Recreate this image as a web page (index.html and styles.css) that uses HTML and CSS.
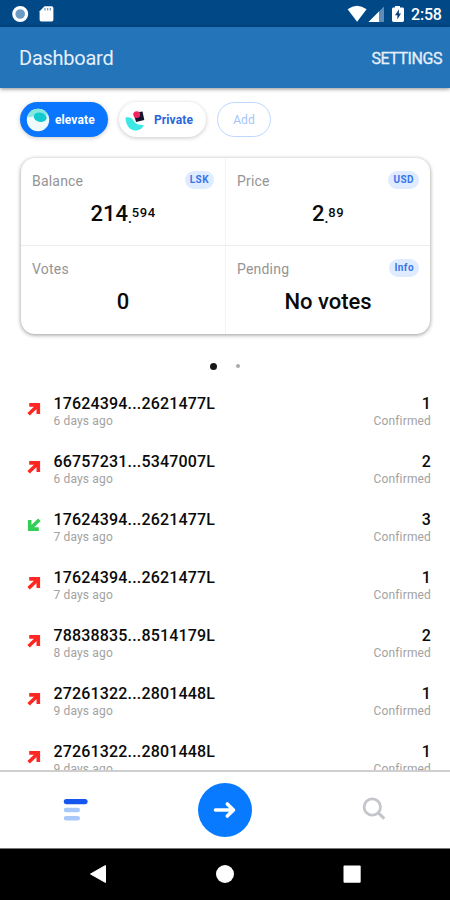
FILE: index.html
```
<!DOCTYPE html>
<html lang="en">
<head>
<meta charset="utf-8">
<title>Dashboard</title>
<link rel="stylesheet" href="styles.css">
</head>
<body>
<svg class="defs" width="0" height="0">
  <symbol id="arrow" viewBox="0 0 14 14"><path d="M1.6 12.2 L10.5 3.8 M2.2 2.9 H11.3 V12" fill="none" stroke="currentColor" stroke-width="3.6"/></symbol>
</svg>
<div class="phone">
  <div class="status">
    <svg class="status-left" width="42" height="18" viewBox="0 0 42 18">
      <circle cx="8.2" cy="9" r="6.4" fill="#6b9bc2" stroke="#fff" stroke-width="3.2"/>
      <path d="M32.5 1.2 H39.6 Q41.4 1.2 41.4 3 V14.8 Q41.4 16.4 39.8 16.4 H29.2 Q27.6 16.4 27.6 14.8 V6.2 Z" fill="#fff"/>
      <path d="M33 3 V5.5 M35.7 3 V5.5 M38.4 3 V5.5" stroke="#6b8fb5" stroke-width="1.2"/>
    </svg>
    <svg class="status-right" width="60" height="18" viewBox="0 0 60 18">
      <path d="M0.6 4.2 Q10 -2.8 19.6 4.2 L10.1 16.8 Z" fill="#fff"/>
      <path d="M21.5 17 L37 1.5 V17 Z" fill="#5c8cba"/>
      <path d="M21.5 17 L32 6.5 V17 Z" fill="#fff"/>
      <path d="M48 1 H53 V2.6 H55.5 Q57 2.6 57 4 V15.6 Q57 17 55.5 17 H46.5 Q45 17 45 15.6 V4 Q45 2.6 46.5 2.6 H48 Z" fill="#fff"/>
      <path d="M52 4.2 L48 10.2 H50.4 V14.6 L54 8.6 H51.8 Z" fill="#0a3f7c"/>
    </svg>
    <span class="clock">2:58</span>
  </div>
  <header class="bar"><h1>Dashboard</h1><span class="settings">SETTINGS</span></header>
  <main class="content">
    <div class="chips">
      <div class="chip chip-active">
        <svg width="24" height="24" viewBox="0 0 24 24"><circle cx="12" cy="12" r="11.2" fill="#effafa"/><path d="M1.5 8.5 Q4 1 12 .8 Q20 1 22.5 8 Q14 3 7.5 8 Q4 10 1.5 8.5Z" fill="#84e8df"/><ellipse cx="14.2" cy="9.2" rx="6.6" ry="4.6" fill="#12c9cf" transform="rotate(12 14.2 9.2)"/></svg>
        <span>elevate</span>
      </div>
      <div class="chip chip-private">
        <svg width="24" height="24" viewBox="0 0 24 24"><path d="M1.5 9.5 C5 8.5 8 9.5 9.5 12.5 C11.5 16.5 16 17 19.7 17 C18.5 20.8 14.8 22.5 11 22.5 C5 22 1.5 16 1.5 9.5Z" fill="#3ce8e4"/><path d="M9.5 5 L18.5 3.5 L20.3 12 L12 14 Z" fill="#15152f"/><circle cx="12.8" cy="6.6" r="3.4" fill="#f2265f"/></svg>
        <span>Private</span>
      </div>
      <div class="chip chip-add"><span>Add</span></div>
    </div>
    <section class="card">
      <div class="cell"><div class="cell-head"><span>Balance</span><b class="tag">LSK</b></div><div class="value">214<i>.</i><sup>594</sup></div></div>
      <div class="cell"><div class="cell-head"><span>Price</span><b class="tag">USD</b></div><div class="value">2<i>.</i><sup>89</sup></div></div>
      <div class="cell"><div class="cell-head"><span>Votes</span></div><div class="value">0</div></div>
      <div class="cell"><div class="cell-head"><span>Pending</span><b class="tag tag-info">Info</b></div><div class="value">No votes</div></div>
    </section>
    <div class="dots"><span class="dot dot-on"></span><span class="dot"></span></div>
    <div class="list">
      <div class="row"><svg class="arrow"><use href="#arrow"/></svg><div class="who"><b>17624394...2621477L</b><span>6 days ago</span></div><div class="amt"><b>1</b><span>Confirmed</span></div></div>
      <div class="row"><svg class="arrow"><use href="#arrow"/></svg><div class="who"><b>66757231...5347007L</b><span>6 days ago</span></div><div class="amt"><b>2</b><span>Confirmed</span></div></div>
      <div class="row"><svg class="arrow arrow-in"><use href="#arrow"/></svg><div class="who"><b>17624394...2621477L</b><span>7 days ago</span></div><div class="amt"><b>3</b><span>Confirmed</span></div></div>
      <div class="row"><svg class="arrow"><use href="#arrow"/></svg><div class="who"><b>17624394...2621477L</b><span>7 days ago</span></div><div class="amt"><b>1</b><span>Confirmed</span></div></div>
      <div class="row"><svg class="arrow"><use href="#arrow"/></svg><div class="who"><b>78838835...8514179L</b><span>8 days ago</span></div><div class="amt"><b>2</b><span>Confirmed</span></div></div>
      <div class="row"><svg class="arrow"><use href="#arrow"/></svg><div class="who"><b>27261322...2801448L</b><span>9 days ago</span></div><div class="amt"><b>1</b><span>Confirmed</span></div></div>
      <div class="row"><svg class="arrow"><use href="#arrow"/></svg><div class="who"><b>27261322...2801448L</b><span>9 days ago</span></div><div class="amt"><b>1</b><span>Confirmed</span></div></div>
    </div>
  </main>
  <nav class="tabs">
    <svg width="24" height="24" viewBox="0 0 24 24"><path d="M3.4 3.6 H22" stroke="#1556ee" stroke-width="5.2" stroke-linecap="round"/><path d="M3 12 H14.8 M3 20.2 H14.8" stroke="#a9c9fa" stroke-width="4.4" stroke-linecap="round"/></svg>
    <div class="send"><svg width="24" height="20" viewBox="0 0 24 20"><path d="M2.5 10 H20.5 M14.3 4 L20.5 10 L14.3 16" fill="none" stroke="#fff" stroke-width="3.6" stroke-linecap="round" stroke-linejoin="round"/></svg></div>
    <svg width="24" height="24" viewBox="0 0 24 24"><circle cx="10.3" cy="9" r="8.2" fill="none" stroke="#c4c6cb" stroke-width="2.8"/><path d="M16 14.7 L22.3 20.7" stroke="#c4c6cb" stroke-width="3.2"/></svg>
  </nav>
  <div class="system">
    <svg width="20" height="20" viewBox="0 0 20 20"><path d="M17.5 1.5 V18.5 L2.5 10 Z" fill="#fff" stroke="#fff" stroke-linejoin="round"/></svg>
    <svg width="20" height="20" viewBox="0 0 20 20"><circle cx="10" cy="10" r="9" fill="#fff"/></svg>
    <svg width="20" height="20" viewBox="0 0 20 20"><rect x="1.5" y="1.5" width="17.2" height="17.2" rx="1" fill="#fff"/></svg>
  </div>
</div>
</body>
</html>
```
FILE: styles.css
```
* { box-sizing: border-box; }
body { margin: 0; background: #fff; font-family: Roboto, "Liberation Sans", sans-serif; color: #0a0a0a; }
.defs { display: block; }
svg { display: block; flex: none; overflow: visible; }
.phone { width: 450px; height: 900px; display: flex; flex-direction: column; overflow: hidden; }
.status { flex: none; height: 27px; background: #004886; display: flex; align-items: center; padding: 1px 8px 0 12px; }
.status-right { margin-left: auto; }
.clock { color: #fff; font-size: 16px; font-weight: 500; width: 31px; margin-left: 4px; white-space: nowrap; letter-spacing: -.2px; }
.bar { flex: none; height: 61px; background: #2474b9; color: #e6effb; display: flex; align-items: center; justify-content: space-between; padding: 1px 8px 0 19px; box-shadow: 0 1px 4px rgba(0,0,0,.45); z-index: 1; }
.bar h1 { margin: 0; font-size: 20px; font-weight: 400; letter-spacing: -.25px; }
.settings { font-size: 16px; letter-spacing: -.45px; -webkit-text-stroke: .3px; }
.content { flex: 1; min-height: 0; overflow: hidden; padding: 14px 19px 0 20px; }
.chips { display: flex; gap: 11px; }
.chip { height: 35px; border-radius: 18px; display: flex; align-items: center; font-size: 12px; font-weight: 700; letter-spacing: .1px; box-shadow: 0 1px 4px rgba(0,0,0,.22); }
.chip-active { width: 88px; padding-left: 6px; gap: 5px; background: #0a76ff; color: #fff; }
.chip-private { width: 87px; padding-left: 5px; gap: 6px; color: #2b66dc; }
.chip-add { width: 54px; justify-content: center; font-weight: 400; color: #a4c6fc; border: 1px solid #bdd7ff; box-shadow: none; }
.card { margin: 21px 0 0 1px; width: 409px; height: 176px; border-radius: 14px; display: grid; grid-template-columns: 205px 204px; grid-template-rows: 88px 88px; box-shadow: 0 1px 4px rgba(0,0,0,.42); }
.cell { padding: 11px 11px 0; }
.cell:nth-child(odd) { border-right: 1px solid #f1f3f7; }
.cell:nth-child(-n+2) { border-bottom: 1px solid #e9edf2; }
.cell-head { height: 25px; display: flex; justify-content: space-between; color: #949494; font-size: 14px; letter-spacing: .2px; line-height: 24px; }
.tag { height: 18px; margin-top: 2px; padding: 0 5px; border-radius: 9px; background: #dfecff; color: #3975eb; font-size: 10px; line-height: 18px; letter-spacing: .45px; }
.value { height: 40px; display: flex; justify-content: center; font-size: 22px; line-height: 40px; font-weight: 500; }
.value i { font-style: normal; font-size: 14px; line-height: 48px; }
.value sup { font-size: 13px; line-height: 37px; letter-spacing: .5px; }
.dots { height: 10px; margin-top: 27px; padding-right: 1px; display: flex; align-items: center; justify-content: center; gap: 19px; }
.dot { width: 4px; height: 4px; border-radius: 50%; background: #aaa; }
.dot-on { width: 7px; height: 7px; background: #171717; }
.list { margin-top: 24px; }
.row { height: 58px; display: flex; padding-left: 7px; }
.arrow { width: 14px; height: 14px; margin-top: 7px; color: #ff2722; }
.arrow-in { color: #33ce55; transform: rotate(180deg); }
.who { margin-left: 12.5px; }
.amt { margin-left: auto; text-align: right; }
.who b, .amt b { display: block; font-size: 16px; font-weight: 500; line-height: 18px; letter-spacing: .17px; }
.who span, .amt span { display: block; font-size: 12px; line-height: 16px; color: #a2a2a2; letter-spacing: .15px; }
.tabs { flex: none; height: 78px; border-top: 2px solid #cfcfcf; background: #fff; display: flex; align-items: center; justify-content: space-between; padding: 0 64px 0 63px; }
.send { width: 54px; height: 54px; border-radius: 50%; background: #087aff; display: flex; align-items: center; justify-content: center; }
.system { flex: none; height: 52px; border-top: 1px solid #777; background: #000; display: flex; align-items: center; justify-content: space-between; padding: 0 88px 1px; }
```
